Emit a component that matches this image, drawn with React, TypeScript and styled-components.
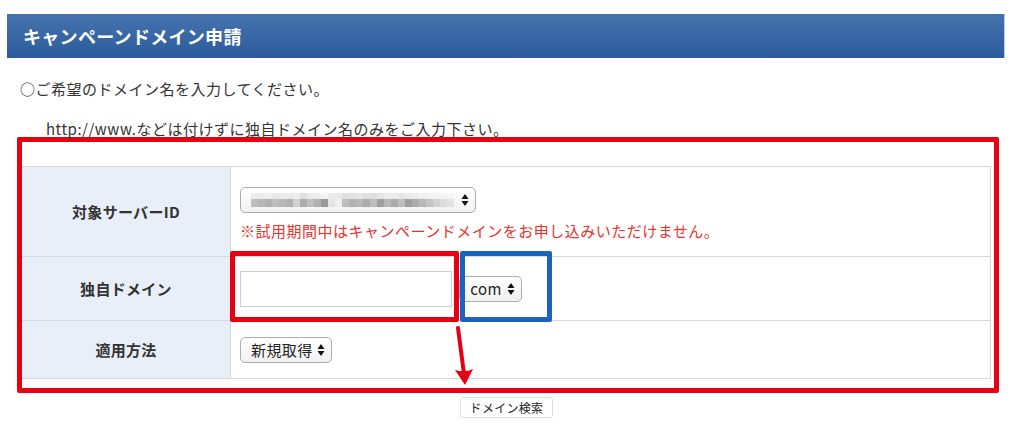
import React from "react";
import styled, { createGlobalStyle } from "styled-components";

const Global = createGlobalStyle`
  html, body { margin: 0; padding: 0; background: #fff; }
  body { font-family: "Noto Sans CJK JP", "Noto Sans", sans-serif; color: #333; }
  * { box-sizing: border-box; }
`;

const Page = styled.div`
  position: relative;
  width: 1024px;
  height: 428px;
  padding-top: 14px;
  overflow: hidden;
`;

const Header = styled.h2`
  margin: 0 19px 0 7px;
  height: 44px;
  display: flex;
  align-items: center;
  padding-left: 16px;
  font-size: 18px;
  font-weight: 700;
  color: #fff;
  letter-spacing: 0.3px;
  background: linear-gradient(#4673ad, #2c5b9d);
  border-right: 1px solid #b9cbe6;
`;

const Lead = styled.p<{ $indent: number; $top: number; $lh: number }>`
  margin: ${(p) => p.$top}px 0 0 ${(p) => p.$indent}px;
  font-size: 15px;
  line-height: ${(p) => p.$lh}px;
  letter-spacing: 0.5px;
  color: #333;
`;

const Frame = styled.div`
  margin: 0 0 0 17px;
  width: 982px;
  height: 256px;
  border: 5px solid #e60012;
  border-radius: 2px;
  padding: 24px 3px 0 0;
`;

const Table = styled.div`
  display: grid;
  grid-template-columns: 209px 1fr;
  grid-template-rows: 90px 64px 58px;
  border-top: 1px solid #d7d7d7;
  border-right: 1px solid #d7d7d7;
`;

const Label = styled.div`
  background: #e9eff8;
  border-bottom: 1px solid #d7d7d7;
  border-right: 1px solid #d7d7d7;
  display: flex;
  align-items: center;
  justify-content: center;
  font-size: 15px;
  font-weight: 700;
  letter-spacing: 0.3px;
  color: #333;
`;

const Cell = styled.div<{ $column?: boolean }>`
  border-bottom: 1px solid #d7d7d7;
  padding-left: 9px;
  display: flex;
  flex-direction: ${(p) => (p.$column ? "column" : "row")};
  align-items: ${(p) => (p.$column ? "flex-start" : "center")};
  gap: ${(p) => (p.$column ? "7px" : "12px")};
  padding-top: ${(p) => (p.$column ? "20px" : "0")};
`;

const SelectBox = styled.div<{ $w: number }>`
  width: ${(p) => p.$w}px;
  height: 26px;
  border: 1px solid #adadad;
  border-radius: 5px;
  background: linear-gradient(#ffffff, #f1f1f1);
  display: flex;
  align-items: center;
  justify-content: space-between;
  padding: 0 6px 0 10px;
  font-size: 15px;
  letter-spacing: 0.4px;
  color: #222;
`;

const Blurred = styled.div`
  display: flex;
  flex-direction: column;
`;

const BlurRow = styled.div`
  display: flex;
`;

const Pix = styled.span<{ $h: number }>`
  display: block;
  width: 7px;
  height: ${(p) => p.$h}px;
  background: #7a7a7a;
`;

const Note = styled.div`
  font-size: 15px;
  color: #e8322c;
  line-height: 22px;
  letter-spacing: 0.5px;
`;

const TextInput = styled.input`
  width: 212px;
  height: 36px;
  border: 1px solid #cfcfcf;
  background: #fff;
  outline: none;
  padding: 0 6px;
  font-size: 15px;
`;

const Dot = styled.span`
  font-size: 12px;
  color: #888;
  margin: 6px -9px 0 -11px;
`;

const Footer = styled.div`
  display: flex;
  justify-content: center;
  width: 969px;
  margin: 4px 0 0 22px;
`;

const Button = styled.button`
  height: 21px;
  padding: 0 9px;
  font-family: inherit;
  font-size: 12px;
  letter-spacing: 0.3px;
  color: #222;
  background: #fff;
  border: 1px solid #e0e0e0;
  border-radius: 3px;
  display: flex;
  align-items: center;
`;

const Mark = styled.div<{ $color: string; $l: number; $w: number }>`
  position: absolute;
  left: ${(p) => p.$l}px;
  top: 251px;
  width: ${(p) => p.$w}px;
  height: 71px;
  border: 5px solid ${(p) => p.$color};
  border-radius: 2px;
  pointer-events: none;
`;

const ArrowSvg = styled.svg`
  position: absolute;
  left: 450px;
  top: 326px;
`;

const Updown = () => (
  <svg width="8" height="14" viewBox="0 0 8 14">
    <path d="M4 1 L7.5 6 L0.5 6 Z" fill="#111" />
    <path d="M4 13 L7.5 8 L0.5 8 Z" fill="#111" />
  </svg>
);

const top = [0.1, 0.12, 0.08, 0.15, 0.1, 0.12, 0.1, 0.2, 0.12, 0.1, 0.05, 0.12, 0.15, 0.2, 0.18, 0.15, 0.2, 0.22, 0.15, 0.12, 0.1, 0.15, 0.12, 0.1, 0.08, 0.06, 0.05, 0.05, 0.04];
const bot = [0.45, 0.5, 0.55, 0.45, 0.5, 0.55, 0.3, 0.6, 0.45, 0.55, 0.75, 0.15, 0.05, 0.45, 0.55, 0.5, 0.6, 0.45, 0.7, 0.5, 0.6, 0.45, 0.7, 0.6, 0.5, 0.4, 0.3, 0.2, 0.15];

export default function App() {
  return (
    <>
      <Global />
      <Page>
        <Header>キャンペーンドメイン申請</Header>
        <Lead $indent={20} $top={21} $lh={20}>○ご希望のドメイン名を入力してください。</Lead>
        <Lead $indent={46} $top={21} $lh={17}>http://www.などは付けずに独自ドメイン名のみをご入力下さい。</Lead>
        <Frame>
          <Table>
            <Label>対象サーバーID</Label>
            <Cell $column>
              <SelectBox $w={236}>
                <Blurred>
                  <BlurRow>
                    {top.map((o, i) => (
                      <Pix key={i} $h={6} style={{ opacity: o }} />
                    ))}
                  </BlurRow>
                  <BlurRow>
                    {bot.map((o, i) => (
                      <Pix key={i} $h={8} style={{ opacity: o }} />
                    ))}
                  </BlurRow>
                </Blurred>
                <Updown />
              </SelectBox>
              <Note>※試用期間中はキャンペーンドメインをお申し込みいただけません。</Note>
            </Cell>
            <Label>独自ドメイン</Label>
            <Cell>
              <TextInput type="text" />
              <Dot>.</Dot>
              <SelectBox $w={63}>
                com
                <Updown />
              </SelectBox>
            </Cell>
            <Label>適用方法</Label>
            <Cell>
              <SelectBox $w={92}>
                新規取得
                <Updown />
              </SelectBox>
            </Cell>
          </Table>
        </Frame>
        <Footer>
          <Button>ドメイン検索</Button>
        </Footer>
        <Mark $color="#e60012" $l={230} $w={229} />
        <Mark $color="#1e62c0" $l={460} $w={92} />
        <ArrowSvg width="30" height="62" viewBox="0 0 30 62">
          <path d="M8 2 L14 48" stroke="#e60012" strokeWidth="4" strokeLinecap="round" fill="none" />
          <path d="M5 44 L15 59 L23 43 Q15 47 5 44 Z" fill="#e60012" />
        </ArrowSvg>
      </Page>
    </>
  );
}
